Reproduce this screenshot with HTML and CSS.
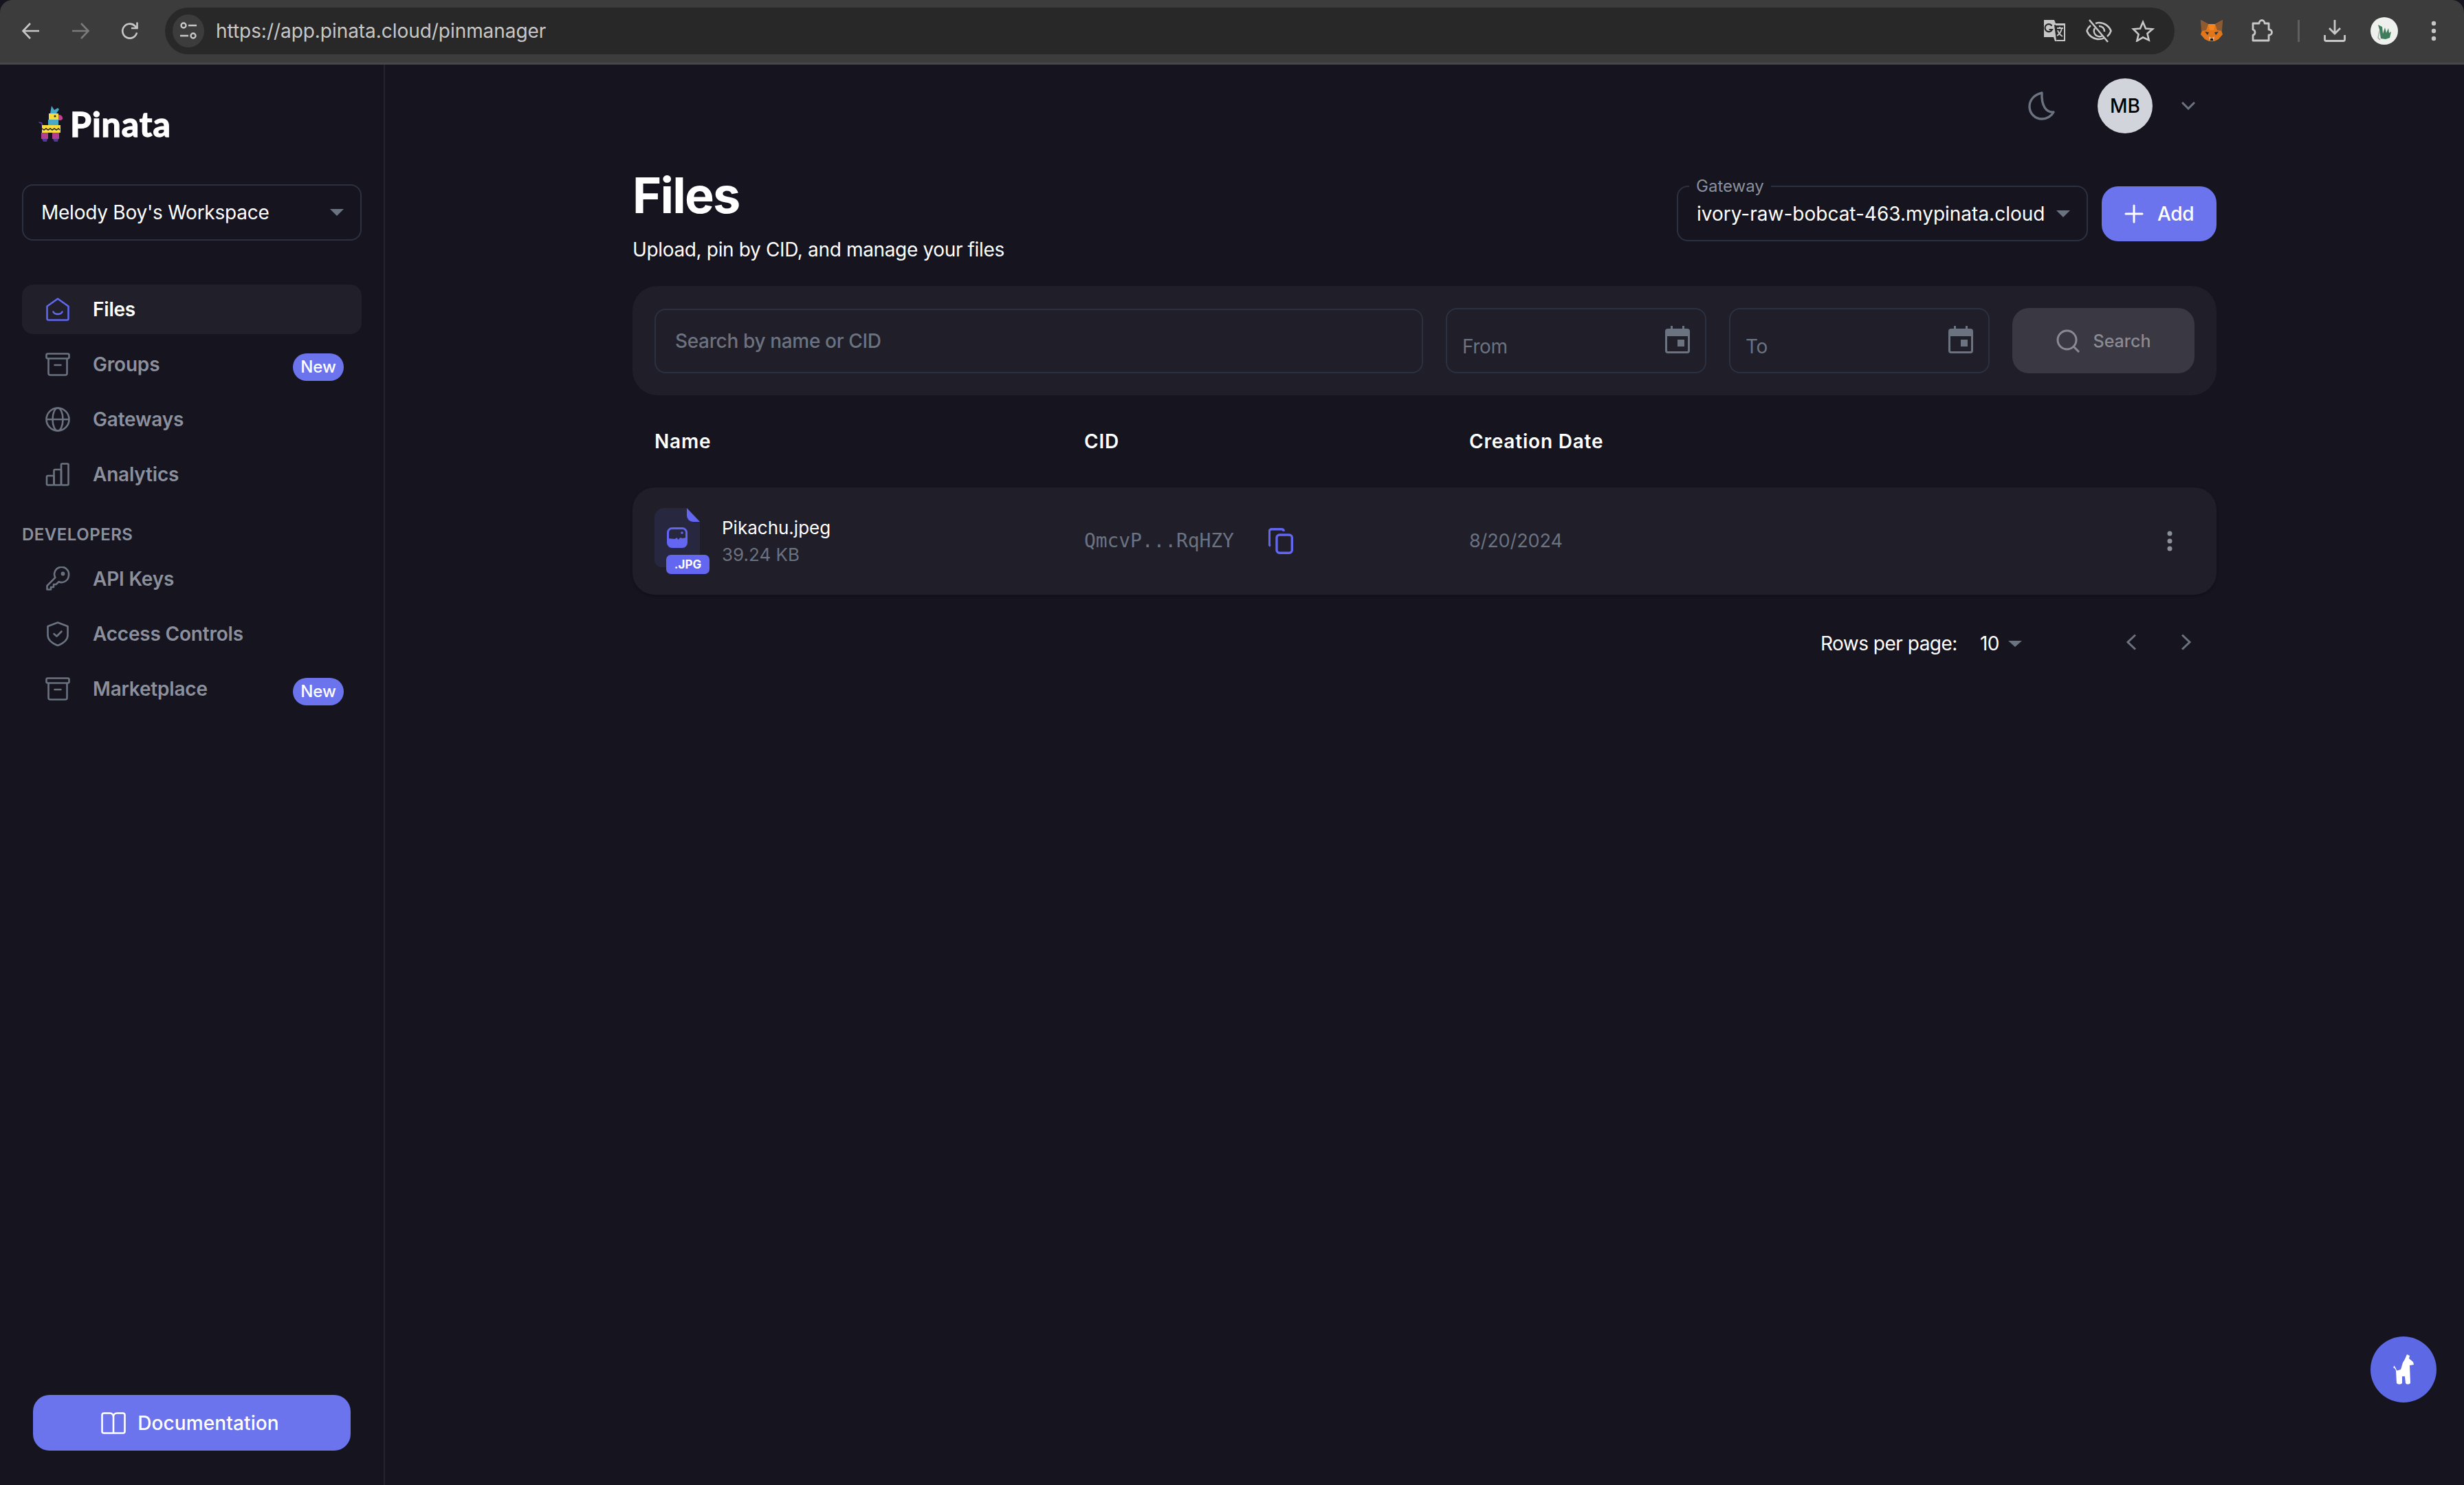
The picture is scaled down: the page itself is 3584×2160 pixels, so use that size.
FILE: index.html
```html
<!DOCTYPE html>
<html lang="en">
<head>
  <meta charset="UTF-8">
  <title>Pinata - Files</title>
  <link rel="stylesheet" href="styles.css">
</head>
<body>

  <!-- browser toolbar -->
  <header class="chrome">
    <span class="chrome-btn"><svg width="30" height="30" viewBox="0 0 30 30" fill="none" stroke="#c7c7c7" stroke-width="2.6"><path d="M27 15H4M14 4 3.500 15 14 26"/></svg></span>
    <span class="chrome-btn"><svg width="30" height="30" viewBox="0 0 30 30" fill="none" stroke="#7a7a7a" stroke-width="2.6"><path d="M3 15h23M16 4l10.500 11L16 26"/></svg></span>
    <span class="chrome-btn"><svg width="30" height="30" viewBox="0 0 30 30" fill="none" stroke="#c7c7c7" stroke-width="2.6"><path d="M25 17.500A10.500 10.500 0 1 1 22 7.500L25.500 11"/><path d="M25.500 2.500V11H17" /></svg></span>
    <div class="omnibox">
      <span class="site-info"><svg width="26" height="28" viewBox="0 0 26 28" fill="none" stroke="#c7c7c7" stroke-width="2.400"><circle cx="6" cy="6" r="3.500"/><path d="M13 6h12M1 21h12"/><circle cx="20" cy="21" r="3.500"/></svg></span>
      <span class="url">https://app.pinata.cloud/pinmanager</span>
      <div class="omni-icons">
        <span class="omni-btn"><svg width="34" height="34" viewBox="0 0 34 34"><path d="M1 1h15l2 5h14v24a2 2 0 0 1-2 2H17l-2-6H1z" fill="#c7c7c7" /><path d="M18 8h12.500v22.500H19l-3-22z" fill="#282828"/><path d="M18 8h13v23H20" fill="none" stroke="#c7c7c7" stroke-width="2"/><path d="M20 13h9M24 11v2M27 13c-1 6-4 9-7 11M21 16c1 4 4 7 7 9" fill="none" stroke="#c7c7c7" stroke-width="1.800"/><path d="M12.500 9.500A5.500 5.500 0 1 0 13 15H8.500" fill="none" stroke="#282828" stroke-width="2.200"/></svg></span>
        <span class="omni-btn"><svg width="38" height="34" viewBox="0 0 38 34" fill="none" stroke="#c7c7c7" stroke-width="2.500"><path d="M7 9C3.500 12 2 15 1.500 17 4 24 11 29 19 29c3 0 5-.5 7-1.500M14 6c1.500-.5 3.500-1 5-1 8 0 15 5 17.500 12-1 3-3 6-5.500 8"/><path d="M13 13a8 8 0 0 0 11 11M19 10a7.500 7.500 0 0 1 8 8"/><path d="M5 1l27 32"/></svg></span>
        <span class="omni-btn"><svg width="34" height="32" viewBox="0 0 34 32" fill="none" stroke="#c7c7c7" stroke-width="2.600"><path d="M17 3l4 9.500 10 .8-7.600 6.500 2.300 9.700L17 25.300l-8.700 5.200 2.300-9.700L3 13.300l10-.8z"/></svg></span>
      </div>
    </div>
    <div class="chrome-right">
      <span class="chrome-btn"><svg width="34" height="32" viewBox="0 0 34 32"><path d="M1 0l11 6h10l11-6-2 15 2 6-6 7-6 3h-8l-6-3-6-7 2-6z" fill="#e2761b"/><path d="M1 0l11 6-3 9-7 1zM33 0L22 6l3 9 7 1z" fill="#8f5a30"/><path d="M12 6h10l-2 9h-6z" fill="#f6851b"/><path d="M7 17l6 1-2 4zM27 17l-6 1 2 4z" fill="#233447"/><path d="M13 24l4 3 4-3-1 5h-6z" fill="#d7c1b3"/><path d="M15 27h4v3h-4z" fill="#161616"/></svg></span>
      <span class="chrome-btn puzzle"><svg width="34" height="34" viewBox="0 0 34 34" fill="none" stroke="#c7c7c7" stroke-width="2.800"><path d="M3 6h9c0-6 8-6 8 0h6v9c6 0 6 8 0 8v8H3v-8c4-1 4-7 0-8z" stroke-linejoin="round"/></svg></span>
      <span class="chrome-sep"></span>
      <span class="chrome-btn"><svg width="32" height="32" viewBox="0 0 32 32" fill="none" stroke="#c7c7c7" stroke-width="2.800"><path d="M16 0v19M8 12l8 8 8-8M1.500 22v6.500a2 2 0 0 0 2 2h25a2 2 0 0 0 2-2V22"/></svg></span>
      <span class="chrome-btn"><svg width="40" height="40" viewBox="0 0 40 40"><circle cx="20" cy="20" r="20" fill="#edf0ec"/><path d="M11 11l6 3 1 10 3-9 2 8 3-7 1 7 3-2-2 9-6 2-7-1-2-13z" fill="#3f7d5d"/><path d="M13 20l-2 10 3 3" fill="none" stroke="#aaa" stroke-width="1.500"/></svg></span>
      <span class="chrome-btn"><svg width="8" height="30" viewBox="0 0 8 30" fill="#c7c7c7"><circle cx="4" cy="4" r="3.200"/><circle cx="4" cy="15" r="3.200"/><circle cx="4" cy="26" r="3.200"/></svg></span>
    </div>
  </header>

  <div class="app">

    <aside class="sidebar">
      <div class="logo">
        <svg class="logo-mark" width="35" height="52" viewBox="0 0 35 52">
          <path d="M0 23l5 1 2 5-2 1-1-4-3-1z" fill="#5b3a9e"/>
          <path d="M17 11l2-11 4 6 5-3 2 2-4 6z" fill="#4aa9c9"/>
          <path d="M15 11h14v9H15z" fill="#f7dc3b"/>
          <path d="M29 13c4 0 6 2 6 5s-3 3-6 3z" fill="#c4418f"/>
          <path d="M14 20h15v8H14z" fill="#4aa9c9"/>
          <path d="M5 28h27v11H5z" fill="#f7dc3b"/>
          <path d="M5 33l3 2 3-2 3 2 3-2 3 2 3-2 3 2 3-2 2 2" fill="none" stroke="#1a1a24" stroke-width="1.500"/>
          <path d="M4 39h10v9H4zM20 39h10v9H20z" fill="#b23e8e"/>
          <path d="M5 48h8l-1 4H7zM21 48h8l-1 4h-5z" fill="#53399b"/>
          <circle cx="24" cy="15" r="1.500" fill="#222"/>
        </svg>
        <span class="logo-text">Pinata</span>
      </div>

      <div class="workspace">
        <span>Melody Boy's Workspace</span>
        <i class="caret"></i>
      </div>

      <nav class="nav">
        <a class="nav-item active">
          <svg class="nav-icon" width="36" height="36" viewBox="0 0 36 36" fill="none" stroke="#6068ee" stroke-width="2.600"><path d="M2.500 13.500 18 2.500l15.500 11v18a2 2 0 0 1-2 2h-27a2 2 0 0 1-2-2z" stroke-linejoin="round"/><path d="M11.500 21.500c2 4.500 11 4.500 13 0" stroke-linecap="round"/></svg>
          <span>Files</span>
        </a>
        <a class="nav-item">
          <svg class="nav-icon" width="36" height="36" viewBox="0 0 36 36" fill="none" stroke="#6b7280" stroke-width="2.600" stroke-linejoin="round"><rect x="1.500" y="2.500" width="33" height="7" rx="2"/><path d="M4.500 10v21a2.500 2.500 0 0 0 2.500 2.500h22a2.500 2.500 0 0 0 2.500-2.500V10M13.500 19h9" stroke-linecap="round"/></svg>
          <span>Groups</span>
          <em class="badge">New</em>
        </a>
        <a class="nav-item">
          <svg class="nav-icon" width="36" height="36" viewBox="0 0 36 36" fill="none" stroke="#6b7280" stroke-width="2.600"><circle cx="18" cy="18" r="16.500"/><ellipse cx="18" cy="18" rx="7.500" ry="16.500"/><path d="M1.500 18h33"/></svg>
          <span>Gateways</span>
        </a>
        <a class="nav-item">
          <svg class="nav-icon" width="36" height="36" viewBox="0 0 36 36" fill="none" stroke="#6b7280" stroke-width="2.600" stroke-linejoin="round"><rect x="2" y="20" width="10.500" height="13.500" rx="1.500"/><rect x="12.500" y="11" width="10.500" height="22.500" rx="1.500"/><rect x="23" y="2.500" width="10.500" height="31" rx="1.500"/></svg>
          <span>Analytics</span>
        </a>

        <h4 class="nav-heading">DEVELOPERS</h4>

        <a class="nav-item">
          <svg class="nav-icon" width="36" height="36" viewBox="0 0 36 36" fill="none" stroke="#6b7280" stroke-width="2.600" stroke-linejoin="round"><path d="M34 12.500a10.500 10.500 0 0 1-14.500 9.700L15.500 26H12v4H8v3.500H2.500v-5.500l11.800-11.800A10.500 10.500 0 1 1 34 12.500z"/><circle cx="25.500" cy="10.500" r="1.600"/></svg>
          <span>API Keys</span>
        </a>
        <a class="nav-item">
          <svg class="nav-icon" width="36" height="36" viewBox="0 0 36 36" fill="none" stroke="#6b7280" stroke-width="2.600" stroke-linejoin="round"><path d="M18 1.500 32.500 7v13c0 6-6 11.500-14.500 15C9.500 31.500 3.500 26 3.500 20V7z"/><path d="M12.500 18l4 3.500 7-7" stroke-linecap="round"/></svg>
          <span>Access Controls</span>
        </a>
        <a class="nav-item">
          <svg class="nav-icon" width="36" height="36" viewBox="0 0 36 36" fill="none" stroke="#6b7280" stroke-width="2.600" stroke-linejoin="round"><rect x="1.500" y="2.500" width="33" height="7" rx="2"/><path d="M4.500 10v21a2.500 2.500 0 0 0 2.500 2.500h22a2.500 2.500 0 0 0 2.500-2.500V10M13.500 19h9" stroke-linecap="round"/></svg>
          <span>Marketplace</span>
          <em class="badge">New</em>
        </a>
      </nav>

      <a class="doc-btn">
        <svg width="36" height="32" viewBox="0 0 36 32" fill="none" stroke="#fff" stroke-width="2.600" stroke-linejoin="round"><path d="M18 7c0-3 -2-5.500-5-5.500H4A2.500 2.500 0 0 0 1.500 4v24A2.500 2.500 0 0 0 4 30.500h28a2.500 2.500 0 0 0 2.500-2.500V4A2.500 2.500 0 0 0 32 1.500h-9C20 1.500 18 4 18 7v23.500"/></svg>
        <span>Documentation</span>
      </a>
    </aside>

    <main class="main">
      <div class="userbar">
        <svg width="40" height="42" viewBox="0 0 40 42" fill="none" stroke="#6b7280" stroke-width="3.400"><path d="M20 2C8 5 2 13 2 22c0 10 8 18 18 18 7 0 14-4 17-10-10 1-18-8-17-28z" stroke-linejoin="round"/></svg>
        <span class="avatar">MB</span>
        <svg class="user-chevron" width="20" height="12" viewBox="0 0 20 12" fill="none" stroke="#6b7280" stroke-width="3"><path d="M1 1l9 9 9-9"/></svg>
      </div>

      <div class="content">
        <section class="page-head">
          <div>
            <h1>Files</h1>
            <p>Upload, pin by CID, and manage your files</p>
          </div>
          <div class="head-actions">
            <div class="gateway">
              <label>Gateway</label>
              <span>ivory-raw-bobcat-463.mypinata.cloud</span>
              <i class="caret"></i>
            </div>
            <a class="add-btn">
              <svg width="28" height="28" viewBox="0 0 28 28" fill="none" stroke="#fff" stroke-width="3" stroke-linecap="round"><path d="M14 2v24M2 14h24"/></svg>
              <span>Add</span>
            </a>
          </div>
        </section>

        <section class="filters">
          <div class="search-input">Search by name or CID</div>
          <div class="date-input">
            <span>From</span>
            <svg width="36" height="40" viewBox="0 0 36 40" fill="#6b7280"><path d="M8 0h3v4h14V0h3v4h4a4 4 0 0 1 4 4v28a4 4 0 0 1-4 4H4a4 4 0 0 1-4-4V8a4 4 0 0 1 4-4h4zM3 15v21a1 1 0 0 0 1 1h28a1 1 0 0 0 1-1V15z"/><rect x="18" y="20" width="10" height="10"/></svg>
          </div>
          <div class="date-input">
            <span>To</span>
            <svg width="36" height="40" viewBox="0 0 36 40" fill="#6b7280"><path d="M8 0h3v4h14V0h3v4h4a4 4 0 0 1 4 4v28a4 4 0 0 1-4 4H4a4 4 0 0 1-4-4V8a4 4 0 0 1 4-4h4zM3 15v21a1 1 0 0 0 1 1h28a1 1 0 0 0 1-1V15z"/><rect x="18" y="20" width="10" height="10"/></svg>
          </div>
          <a class="search-btn">
            <svg width="34" height="34" viewBox="0 0 34 34" fill="none" stroke="#8b8a93" stroke-width="3"><circle cx="15.500" cy="15.500" r="13.500"/><path d="M25 25l8 8"/></svg>
            <span>Search</span>
          </a>
        </section>

        <div class="table-head">
          <span>Name</span>
          <span>CID</span>
          <span>Creation Date</span>
        </div>

        <div class="table-row">
          <div class="file-cell">
            <div class="file-icon">
              <svg width="66" height="86" viewBox="0 0 66 86">
                <path d="M14 0h34v0l18 19v57a10 10 0 0 1-10 10H10A10 10 0 0 1 0 76V14A14 14 0 0 1 14 0z" fill="#282740"/>
                <path d="M47 0l19 20H56a9 9 0 0 1-9-9z" fill="#6366f1"/>
                <rect x="19.500" y="29.500" width="27" height="27" rx="6" fill="none" stroke="#6366f1" stroke-width="3"/>
                <path d="M19.500 44l10 1 3-2 2 3 3-3 3 1 6-1v8a5 5 0 0 1-5 5h-17a5 5 0 0 1-5-5z" fill="#6366f1"/>
                <circle cx="40" cy="36" r="1.800" fill="#6366f1"/>
              </svg>
              <span class="file-ext">.JPG</span>
            </div>
            <div class="file-meta">
              <span class="file-name">Pikachu.jpeg</span>
              <span class="file-size">39.24 KB</span>
            </div>
          </div>
          <div class="cid-cell">
            <span class="cid">QmcvP...RqHZY</span>
            <svg width="36" height="38" viewBox="0 0 36 38" fill="none" stroke="#6366f1" stroke-width="3.400" stroke-linejoin="round"><path d="M3 26c-1.500-.5-1.700-2-1.700-3V5A3.500 3.500 0 0 1 5 1.700h14c1.800 0 3.200 1.200 3.500 3"/><rect x="12" y="10" width="22.300" height="26.300" rx="4"/></svg>
          </div>
          <span class="date-cell">8/20/2024</span>
          <span class="kebab"><svg width="8" height="30" viewBox="0 0 8 30" fill="#8b8f99"><circle cx="4" cy="4" r="3.500"/><circle cx="4" cy="15" r="3.500"/><circle cx="4" cy="26" r="3.500"/></svg></span>
        </div>

        <div class="pagination">
          <span>Rows per page:</span>
          <span class="per-page">10</span>
          <i class="caret small"></i>
          <span class="page-btns">
            <span class="page-btn"><svg width="16" height="24" viewBox="0 0 16 24" fill="none" stroke="#6b7280" stroke-width="3"><path d="M14 1.500 3 12l11 10.500"/></svg></span>
            <span class="page-btn"><svg width="16" height="24" viewBox="0 0 16 24" fill="none" stroke="#6b7280" stroke-width="3"><path d="M2 1.500 13 12 2 22.500"/></svg></span>
          </span>
        </div>
      </div>
    </main>
  </div>

  <a class="fab">
    <svg width="30" height="44" viewBox="0 0 30 44" fill="#fff"><path d="M20 0l4 2-1 4 6 5 1 4-6 1 1 26q-4 3-7 0l-1-10h-4l0 10q-4 3-8 0L4 24l7-2 3-10 3-5z"/><path d="M5 25C4 21 2 19 0 19M4 22c-1-2-2-4-3-5" fill="none" stroke="#fff" stroke-width="1.200"/></svg>
  </a>

</body>
</html>
```

FILE: styles.css
```css
*{
  box-sizing:border-box;
}

html,body{
  margin:0px; padding:0px; width:3584px; height:2160px; overflow:hidden;
}

body{
  display:flex; flex-direction:column; position:relative;
  background:#15141f; color:#fff;
  font-family:"Inter","Noto Sans",sans-serif; font-size:28px; line-height:40px; letter-spacing:-.35px;
}

svg{
  display:block; flex:none;
}

a{
  color:inherit; text-decoration:none;
}

/* browser toolbar */

.chrome{
  flex:none; height:94px; display:flex; align-items:center; padding:0px 8px 2px 9px;
  background:#3c3c3c; border-bottom:3px solid #474747; border-radius:18px 18px 0px 0px;
}

.chrome-btn{
  width:72px; height:72px; display:flex; align-items:center; justify-content:center; flex:none;
}

.omnibox{
  width:2923px; height:68px; margin-left:15px; padding:0px 14px 0px 11px; display:flex; align-items:center;
  background:#282828; border-radius:34px;
}

.site-info{
  width:46px; height:48px; margin-right:17px; display:flex; align-items:center; justify-content:center;
  background:#3c3c3c; border-radius:50%;
}

.url{
  color:#c7c7c7; font-size:28px; letter-spacing:-.05px;
}

.omni-icons{
  margin-left:auto; display:flex;
}

.omni-btn{
  width:64px; height:64px; display:flex; align-items:center; justify-content:center;
}

.chrome-right{
  margin-left:18px; display:flex; align-items:center;
}

.chrome-right .puzzle{
  margin-left:2px;
}

.chrome-sep{
  width:33px; height:32px; flex:none;
  background:linear-gradient(#5f5f5f,#5f5f5f) center/3px 100% no-repeat;
}

/* app layout */

.app{
  flex:1; display:flex; min-height:0;
}

.sidebar{
  width:560px; flex:none; display:flex; flex-direction:column; padding:0px 32px 50px 32px;
  border-right:2px solid #24242f;
}

.logo{
  margin:60px 0px 0px 24px; height:52px; display:flex; align-items:center; gap:11px;
}

.logo-text{
  font-family:"Lato","Inter",sans-serif; font-weight:700; font-size:50px; line-height:52px; letter-spacing:1px;
  -webkit-text-stroke:1.4px #fff;
}

.workspace{
  width:494px; height:82px; margin-top:62px; padding:0px 24px 0px 26px; display:flex; align-items:center; justify-content:space-between;
  border:2px solid #2c3140; border-radius:16px; font-weight:400; letter-spacing:-.25px;
}

.caret{
  width:0px; height:0px; flex:none; display:block;
  border-left:10px solid transparent; border-right:10px solid transparent; border-top:10px solid #6b7280;
}

.nav{
  margin-top:64px; display:flex; flex-direction:column; gap:8px;
}

.nav-item{
  width:494px; height:72px; padding:0px 26px 0px 34px; display:flex; align-items:center;
  border-radius:16px; color:#8b909c; font-weight:600; letter-spacing:-.2px;
}

.nav-item.active{
  background:#201f2a; color:#fff;
}

.nav-icon{
  margin-right:33px;
}

.badge{
  margin-left:auto; margin-top:8px; width:74px; height:40px; display:flex; align-items:center; justify-content:center;
  background:#6b74ec; border-radius:20px; color:#fff; font-style:normal; font-weight:500; font-size:24px; letter-spacing:0px;
}

.nav-heading{
  margin:28px 0px 4px 0px; height:32px; color:#8b909c; font-size:24px; line-height:32px; font-weight:600; letter-spacing:.5px;
}

.doc-btn{
  margin-top:auto; margin-left:16px; width:462px; height:81px; padding-right:5px; display:flex; align-items:center; justify-content:center; gap:17px;
  background:#6b74ec; border-radius:24px; font-weight:500; letter-spacing:.1px;
}

/* main */

.main{
  flex:1; min-width:0;
}

.userbar{
  height:100px; padding:20px 381px 0px 0px; display:flex; align-items:center; justify-content:flex-end;
}

.avatar{
  width:80px; height:80px; margin-left:61px; display:flex; align-items:center; justify-content:center;
  background:#d1d5db; border-radius:50%; color:#000; font-weight:500; letter-spacing:0px;
}

.user-chevron{
  margin:0px 10px 0px 42px;
}

.content{
  width:2304px; margin:0px auto;
}

.page-head{
  margin-top:48px; display:flex; justify-content:space-between; align-items:flex-start;
}

.page-head h1{
  margin:2px 0px 0px 0px; font-size:72px; line-height:80px; font-weight:700; letter-spacing:-1.8px;
}

.page-head p{
  margin:19px 0px 0px 0px;
}

.head-actions{
  margin-top:28px; display:flex; gap:20px;
}

.gateway{
  width:598px; height:81px; padding:0px 24px 0px 27px; display:flex; align-items:center; justify-content:space-between; position:relative;
  border:2px solid #2c3140; border-radius:16px; font-weight:400; letter-spacing:0px;
}

.gateway label{
  position:absolute; left:16px; top:-15px; padding:0px 10px; background:#15141f;
  color:#8b909c; font-size:24px; line-height:28px; font-weight:400; letter-spacing:0px;
}

.add-btn{
  width:167px; height:80px; margin-top:1px; display:flex; align-items:center; justify-content:center; gap:20px;
  background:#6b74ec; border-radius:24px; font-weight:500;
}

.filters{
  margin-top:33px; height:159px; padding:32px; display:flex; gap:33px; align-items:center;
  background:#1f1e29; border-radius:36px;
}

.search-input{
  flex:1; height:94px; padding:0px 28px; display:flex; align-items:center;
  border:2px solid #2c3140; border-radius:16px; color:#6b7280; font-weight:500;
}

.date-input{
  width:379px; height:95px; padding:0px 22px 0px 22px; display:flex; align-items:center; justify-content:space-between;
  border:2px solid #2c3140; border-radius:16px; color:#6b7280;
}

.date-input span{
  margin-top:16px;
}

.date-input svg{
  margin-top:-4px;
}

.search-btn{
  width:265px; height:95px; display:flex; align-items:center; justify-content:center; gap:20px;
  background:#3a3842; border-radius:24px; color:#8b8a93; font-size:25px; font-weight:500; letter-spacing:0px;
}

.table-head,
.table-row{
  display:grid; grid-template-columns:625px 560px 1fr 72px; padding:0px 32px; align-items:center;
}

.table-head{
  height:134px; font-weight:600; letter-spacing:.8px;
}

.table-row{
  height:156px; background:#1f1e29; border-radius:32px; box-shadow:0px 2px 4px rgba(0,0,0,.2);
}

.file-cell{
  display:flex; align-items:center; gap:32px;
}

.file-icon{
  width:66px; height:96px; position:relative; flex:none;
}

.file-ext{
  position:absolute; left:17px; bottom:0px; width:63px; height:28px; display:flex; align-items:center; justify-content:center;
  background:#6366f1; border-radius:7px; font-size:17px; line-height:28px; font-weight:700; letter-spacing:0px;
}

.file-meta{
  display:flex; flex-direction:column; font-size:26px; letter-spacing:0px;
}

.file-name{
  line-height:39px;
}

.file-size{
  color:#6b7280; line-height:39px;
}

.cid-cell{
  display:flex; align-items:center; gap:50px;
}

.cid{
  color:#6b7280; font-family:"DejaVu Sans Mono",monospace; font-size:28px; letter-spacing:-.1px;
}

.date-cell{
  color:#6b7280; font-size:27px; letter-spacing:-.1px;
}

.kebab{
  display:flex; justify-content:center;
}

.pagination{
  height:80px; margin-top:31px; padding-right:4px; display:flex; align-items:center; justify-content:flex-end; letter-spacing:-.5px;
}

.per-page{
  margin-left:33px; margin-right:13px;
}

.caret.small{
  border-top-width:9px;
}

.page-btns{
  margin-left:119px; margin-bottom:4px; display:flex;
}

.page-btn{
  width:80px; height:80px; display:flex; align-items:center; justify-content:center;
}

.fab{
  position:absolute; left:3448px; top:1944px; width:96px; height:96px; display:flex; align-items:center; justify-content:center;
  background:#5d68e4; border-radius:50%;
}
```
